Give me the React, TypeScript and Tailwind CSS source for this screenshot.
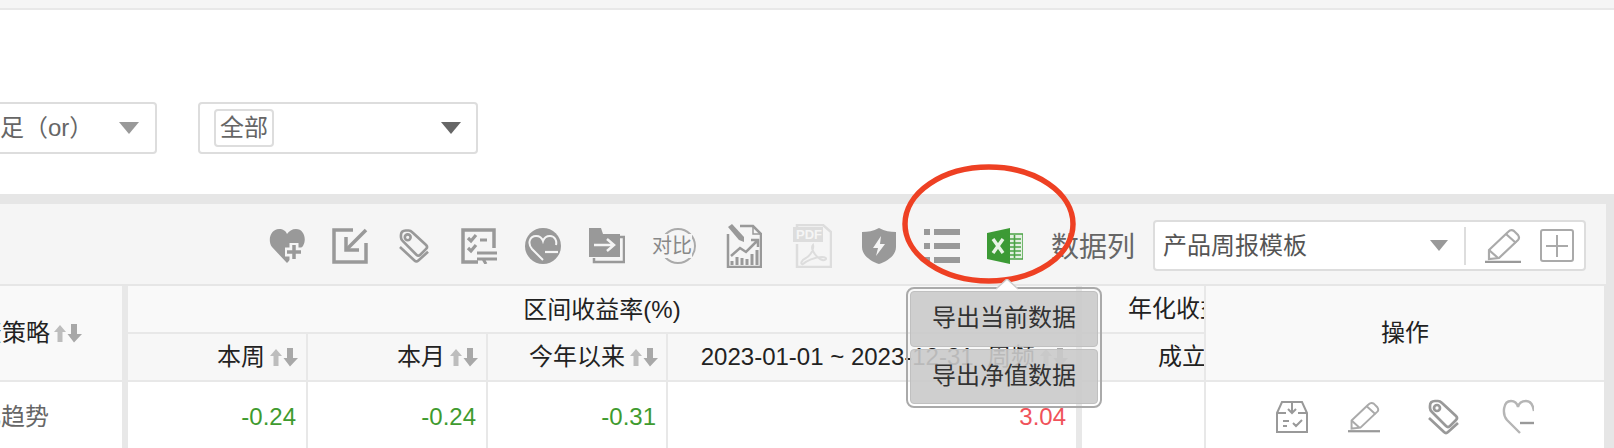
function Triangle({ color }: { color: string }) {
  return <span className={"h-0 w-0 border-x-[10px] border-t-[12px] border-x-transparent " + color} />;
}

function SortArrows() {
  return (
    <svg width="28" height="19" viewBox="0 0 28 19" className="shrink-0">
      <polygon points="6,1 12,8 8.5,8 8.5,18 3.5,18 3.5,8 0,8" fill="#bdbdbd" />
      <polygon points="17,0 23,0 23,10 28,10 20,18.5 13.5,10 17,10" fill="#a8a8a8" />
    </svg>
  );
}

function PencilIcon({ className }: { className: string }) {
  return (
    <svg viewBox="0 0 36 34" fill="none" stroke="#aaa" strokeWidth="2.2" className={className}>
      <path d="M4 21 L23 3 Q26 0 29 2 L33 6 Q35 9 33 11 L14 29 L4 30 Z" />
      <path d="M21 5 L31 14 M4 21 L13 29" />
      <path d="M0 33 H36" strokeWidth="2.5" stroke="#999" />
    </svg>
  );
}

function TagIcon({ className }: { className: string }) {
  return (
    <svg viewBox="0 0 31 36" fill="none" stroke="#999" strokeWidth="2.7" className={className}>
      <path d="M2 7 Q2 2 7 2 L10 2 Q12 2 14 4 L28 17 Q30 19 28 21 L22 27 Q20 29 18 27 L4 13 Q2 11 2 9 Z" />
      <circle cx="9" cy="9" r="3" />
      <path d="M1 19 L16 33 Q18 35 20 33 L30 24" />
    </svg>
  );
}

function ToolbarIcons() {
  return (
    <div className="flex items-center">
      <svg viewBox="0 0 36 36" className="h-[36px] w-[36px] shrink-0">
        <path d="M18 35 L3 19 C-2 12 2 1 10 1 C14 1 17 3 18 6 C20 3 23 1 27 1 C35 1 38 11 34 18 Z" fill="#999" />
        <path d="M25 15 V33 M16 24 H34" stroke="#f5f5f5" strokeWidth="9" />
        <path d="M25 17 V31 M18 24 H32" stroke="#999" strokeWidth="3.5" />
      </svg>
      <svg viewBox="0 0 36 36" fill="none" stroke="#999" strokeWidth="3.5" className="ml-[27px] h-[36px] w-[36px] shrink-0">
        <path d="M21 2 H2 V34 H34 V15" />
        <path d="M34 2 L15 21" />
        <path d="M14 9 V22 H27" />
      </svg>
      <TagIcon className="ml-[31px] h-[36px] w-[30px] shrink-0" />
      <svg viewBox="0 0 36 36" fill="none" stroke="#999" strokeWidth="3.5" className="ml-[32px] h-[36px] w-[36px] shrink-0">
        <path d="M17 34 H2 V2 H33 V20" />
        <path d="M7 10 L10 13 L15 7 M7 20 L10 23 L15 17 M19 12 H26" strokeWidth="3.2" />
        <path d="M16 25 H36 M16 31 H36 M22 31 L25 36" strokeWidth="3" />
      </svg>
      <svg viewBox="0 0 36 36" className="ml-[28px] h-[36px] w-[36px] shrink-0">
        <circle cx="18" cy="18" r="18" fill="#999" />
        <path d="M18 32 L7 21 C2 15 5 8 11 8 C14 8 17 10 18 13 C19 10 22 8 25 8 C30 8 32 13 31 17" fill="none" stroke="#f5f5f5" strokeWidth="2" />
        <path d="M20 24 H33" stroke="#f5f5f5" strokeWidth="2.2" />
      </svg>
      <svg viewBox="0 0 36 36" className="ml-[28px] h-[36px] w-[36px] shrink-0">
        <path d="M5 30 V34 H35 V9 H31" fill="none" stroke="#999" strokeWidth="2.5" />
        <path d="M0 0 H12 L14 6 H31 V29 H0 Z" fill="#999" />
        <path d="M5 17 H24 M18 11 L25 17 L18 23" fill="none" stroke="#f5f5f5" strokeWidth="2.5" />
      </svg>
      <svg viewBox="0 0 44 36" className="ml-[27px] h-[36px] w-[44px] shrink-0">
        <circle cx="26" cy="18" r="17" fill="none" stroke="#aaa" strokeWidth="2" />
        <rect x="0" y="6" width="40" height="24" fill="#f5f5f5" />
        <text x="0" y="25" fontSize="20" fill="#888" fontFamily="'Noto Sans CJK SC',sans-serif">对比</text>
      </svg>
      <svg viewBox="0 0 36 44" fill="none" stroke="#999" strokeWidth="2.5" className="ml-[30px] h-[44px] w-[36px] shrink-0">
        <path d="M14 2 H27 L35 10 V43 H2 V10" />
        <path d="M27 2 V10 H35" strokeWidth="1.5" />
        <path d="M2 3 L6 0 L18 13 L18 18 L13 16 Z" fill="#999" stroke="none" />
        <path d="M5 32 L14 24 L20 28 L31 17 M25 16 H32 V23" strokeWidth="2.5" />
        <path d="M6 41 V37 M11 41 V33 M16 41 V34 M21 41 V35 M26 41 V30 M31 41 V26" strokeWidth="3" />
      </svg>
      <svg viewBox="0 0 39 44" fill="none" stroke="#ddd" strokeWidth="2.5" className="ml-[31px] h-[44px] w-[39px] shrink-0">
        <path d="M4 20 V43 H38 V8 L30 1 H4 V4" />
        <rect x="0" y="3" width="30" height="15" fill="#ddd" stroke="none" />
        <text x="3" y="15" fontSize="13" fontWeight="700" fill="#f5f5f5" stroke="none" fontFamily="'Liberation Sans',sans-serif">PDF</text>
        <path d="M20 21 C17 24 22 32 27 35 C33 38 36 33 29 33 C22 33 13 37 10 40 C7 41 8 36 13 34 C18 31 21 25 20 21 Z" strokeWidth="2" />
      </svg>
      <svg viewBox="0 0 34 36" className="ml-[30px] h-[36px] w-[34px] shrink-0">
        <path d="M17 0 C23 3 28 4 34 4 V19 C34 27 26 33 17 36 C8 33 0 27 0 19 V4 C6 4 11 3 17 0 Z" fill="#999" />
        <path d="M19 8 L11 20 H16 L14 28 L23 16 H18 Z" fill="#f5f5f5" />
      </svg>
      <svg viewBox="0 0 36 36" fill="#999" className="ml-[28px] h-[36px] w-[36px] shrink-0">
        <rect x="0" y="1" width="6" height="6" />
        <rect x="10" y="1" width="26" height="6" />
        <rect x="0" y="15" width="6" height="6" />
        <rect x="10" y="15" width="26" height="6" />
        <rect x="0" y="29" width="6" height="6" />
        <rect x="10" y="29" width="26" height="6" />
      </svg>
      <svg viewBox="0 0 36 36" className="ml-[27px] h-[36px] w-[36px] shrink-0">
        <rect x="20" y="6" width="16" height="25" fill="#e4f0e2" stroke="#4aa345" strokeWidth="1.5" />
        <path d="M23 11 H34 M23 15 H34 M23 19 H34 M23 23 H34 M23 27 H34 M27.5 7 V30" stroke="#4aa345" strokeWidth="1.6" />
        <polygon points="0,5 23,0 23,36 0,31" fill="#3c9a35" />
        <path d="M6 11 L16 25 M16 11 L6 25" stroke="#e8f3e6" strokeWidth="3.4" />
      </svg>
    </div>
  );
}

export default function App() {
  const head = "flex items-center justify-end gap-[5px] border-r-2 border-b-2 border-[#e8e8e8] bg-[#f7f7f7] pr-[8px] text-[#222]";
  const num = "flex items-center justify-end border-r-2 border-[#e8e8e8] bg-white pt-[3px] pr-[10px]";

  return (
    <div className="relative h-[448px] w-[1614px] overflow-hidden bg-[#e6e6e6] text-[24px] [font-family:'Liberation_Sans','Noto_Sans_CJK_SC',sans-serif]">
      <div className="h-[10px] border-b-2 border-[#e8e8e8] bg-[#f5f5f5]" />

      {/* filters */}
      <div className="flex h-[184px] items-start gap-[41px] bg-white pt-[92px] text-[#666]">
        <div className="ml-[-43px] flex h-[52px] w-[200px] items-center justify-between rounded-[4px] border-2 border-[#ddd] pr-[16px]">
          <span className="ml-[17px] whitespace-nowrap">满足（or）</span>
          <Triangle color="border-t-[#999]" />
        </div>
        <div className="flex h-[52px] w-[280px] items-center justify-between rounded-[4px] border-2 border-[#ddd] pr-[15px] pl-[14px]">
          <span className="flex h-[38px] w-[60px] items-center justify-center rounded-[4px] border-2 border-[#ddd]">全部</span>
          <Triangle color="border-t-[#666]" />
        </div>
      </div>

      <div className="h-[10px]" />

      {/* toolbar */}
      <div className="flex h-[80px] w-[1606px] items-center bg-[#f5f5f5] pt-[3px] pl-[269px] text-[#666]">
        <ToolbarIcons />
        <span className="mt-[5px] ml-[28px] text-[28px] whitespace-nowrap">数据列</span>
        <div className="ml-[18px] flex h-[51px] w-[433px] items-center rounded-[4px] border-2 border-[#ddd] bg-white pl-[8px] text-[#555]">
          <span className="whitespace-nowrap">产品周报模板</span>
          <span className="ml-[123px] h-0 w-0 border-x-[9px] border-t-[11px] border-x-transparent border-t-[#999]" />
          <span className="ml-[16px] h-[38px] w-[2px] bg-[#ddd]" />
          <PencilIcon className="ml-[19px] h-[34px] w-[36px]" />
          <span className="ml-[19px] flex h-[33px] w-[34px] items-center justify-center rounded-[3px] border-2 border-[#aaa]">
            <svg width="22" height="22" viewBox="0 0 22 22" stroke="#aaa" strokeWidth="2">
              <path d="M11 0 V22 M0 11 H22" />
            </svg>
          </span>
        </div>
      </div>

      <div className="h-[2px]" />

      {/* table */}
      <div className="grid w-[1604px] grid-cols-[128px_180px_180px_180px_414px_124px_398px] grid-rows-[48px_48px_66px]">
        <div className="row-span-2 flex items-center justify-end gap-[4px] overflow-hidden border-r-[6px] border-b-2 border-[#e8e8e8] bg-[#f9f9f9] pr-[40px] whitespace-nowrap text-[#222]">
          投资策略
          <SortArrows />
        </div>
        <div className="col-span-4 flex items-center justify-center border-r-[6px] border-b-2 border-[#e8e8e8] bg-[#f9f9f9] pt-[2px] whitespace-nowrap text-[#222]">
          区间收益率(%)
        </div>
        <div className="flex items-center overflow-hidden border-r-2 border-b-2 border-[#e8e8e8] bg-[#f9f9f9] pl-[46px] whitespace-nowrap text-[#222]">
          年化收益率(%)
        </div>
        <div className="row-span-2 flex items-center justify-center border-b-2 border-[#e8e8e8] bg-[#f9f9f9] text-[#222]">操作</div>

        <div className={head}>本周<SortArrows /></div>
        <div className={head}>本月<SortArrows /></div>
        <div className={head}>今年以来<SortArrows /></div>
        <div className={head + " border-r-[6px] whitespace-nowrap"}>2023-01-01 ~ 2023-12-31{"\u00a0\u00a0"}周频<SortArrows /></div>
        <div className="flex items-center overflow-hidden border-r-2 border-b-2 border-[#e8e8e8] bg-[#f7f7f7] pl-[76px] whitespace-nowrap text-[#222]">成立以来</div>

        <div className="flex items-center justify-end overflow-hidden border-r-[6px] border-[#e8e8e8] bg-white pt-[3px] pr-[73px] whitespace-nowrap text-[#666]">量化趋势</div>
        <div className={num + " text-[#3f9b2f]"}>-0.24</div>
        <div className={num + " text-[#3f9b2f]"}>-0.24</div>
        <div className={num + " text-[#3f9b2f]"}>-0.31</div>
        <div className={num + " border-r-[6px] text-[#f0525a]"}>3.04</div>
        <div className="border-r-2 border-[#e8e8e8] bg-white" />
        <div className="flex items-center justify-center bg-white pt-[3px]">
          <svg viewBox="0 0 32 32" fill="none" stroke="#999" strokeWidth="2" className="h-[32px] w-[32px]">
            <path d="M1 12 L6 1 H26 L31 12 V31 H1 Z M1 12 H10 M22 12 H31" />
            <path d="M16 2 V12 M12 8 L16 12 L20 8" />
            <path d="M7 20 H13 M7 25 H11 M17 22 L20 25 L26 19" />
          </svg>
          <PencilIcon className="ml-[40px] h-[32px] w-[32px]" />
          <TagIcon className="ml-[48px] h-[36px] w-[31px]" />
          <svg viewBox="0 0 32 36" fill="none" stroke="#b5b5b5" strokeWidth="2.4" className="ml-[43px] h-[36px] w-[32px]">
            <path d="M18 34 L5 21 C0 15 1 2 9 2 C13 2 15 4 16 8 C17 4 20 2 24 2 C29 2 31 6 32 12" />
            <path d="M18 24 H32" stroke="#999" />
          </svg>
        </div>
      </div>

      {/* annotation drawn over the screenshot */}
      <svg width="176" height="122" viewBox="0 0 176 122" className="absolute top-[164px] left-[902px]" fill="none">
        <ellipse cx="87" cy="60" rx="84" ry="57" stroke="#ee4023" strokeWidth="5.5" />
      </svg>

      {/* export menu */}
      <div className="absolute top-[287px] left-[906px] flex h-[121px] w-[196px] flex-col gap-[2px] rounded-[8px] border-2 border-[#aaa] p-[2px] text-[#333]">
        <div className="flex h-[56px] items-center justify-center rounded-[4px] border border-[#c0c0c0] bg-[#cacaca]/90 pb-[2px]">导出当前数据</div>
        <div className="flex h-[55px] items-center justify-center rounded-[4px] border border-[#c0c0c0] bg-[#cacaca]/90 pb-[2px]">导出净值数据</div>
      </div>
      <svg width="22" height="11" viewBox="0 0 22 11" className="absolute top-[279px] left-[996px]">
        <polygon points="0,10 11,0 22,10 22,11 0,11" fill="#fff" />
        <path d="M0 10 L11 0 L22 10" fill="none" stroke="#ccc" strokeWidth="1.5" />
      </svg>
    </div>
  );
}
